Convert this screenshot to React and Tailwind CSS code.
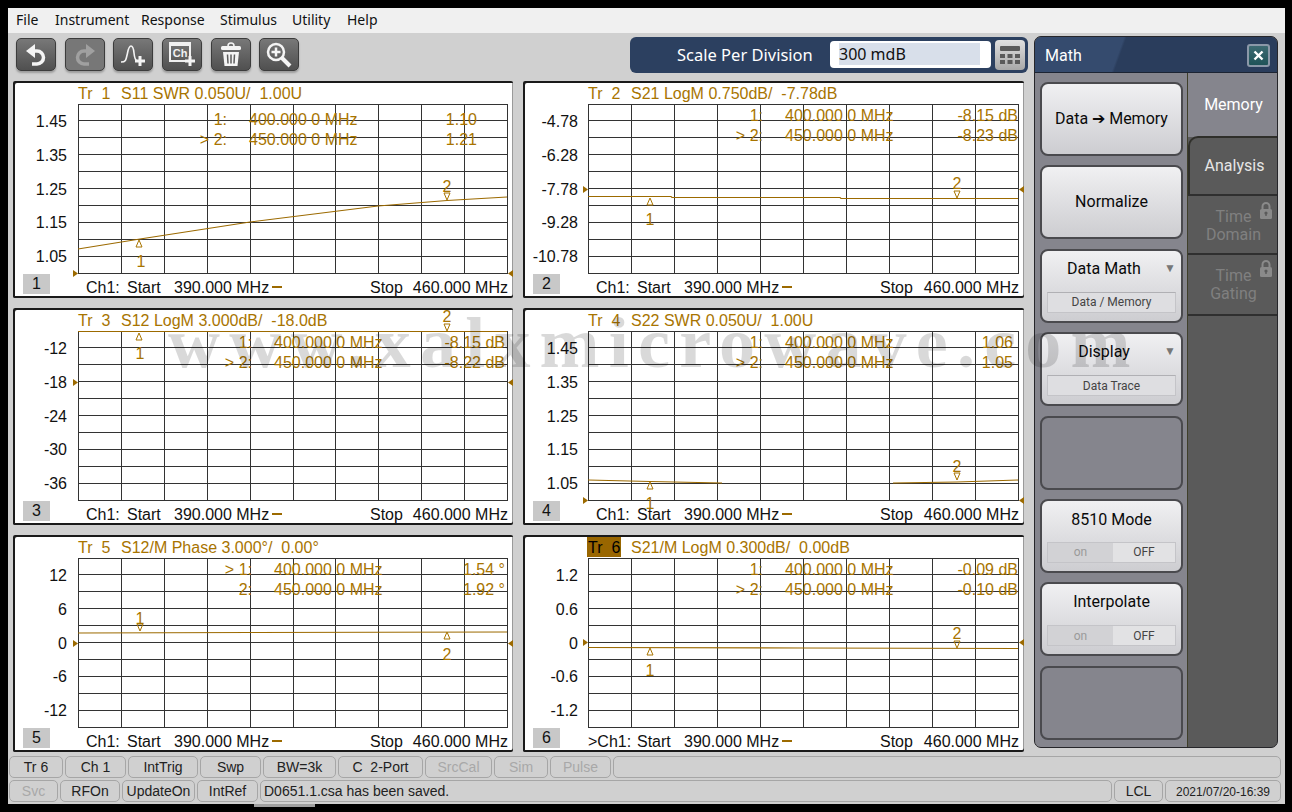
const amber = "#a87400";
const traceColor = "#9c6a00";

const xsLeft = [65, 108, 151, 194, 237, 280, 322, 365, 408, 451, 494];
const xsRight = [65, 108, 151, 194, 237, 280, 323, 366, 409, 452, 495];
const ys = [23, 39, 56, 73, 90, 107, 124, 141, 158, 175, 192];
const labelTops = [40, 74, 108, 141, 175];

const panels = [
  {
    n: "1", tr: "Tr  1", title: "S11 SWR 0.050U/  1.00U", labels: ["1.45", "1.35", "1.25", "1.15", "1.05"],
    rows: [["1:", "1.10"], ["> 2:", "1.21"]], mTop: 38, preRight: 214, freqLeft: 236, valRight: 464, arrow: 192,
    traces: ["M65 168 L127 158 L237 141 L365 125 L434 119.5 L494 116"],
    m1: { x: 126, y: 159, up: true, dy: 180, dx: 128 }, m2: { x: 434, y: 112, up: false, dy: 105, dx: 434 },
  },
  {
    n: "2", tr: "Tr  2", title: "S21 LogM 0.750dB/  -7.78dB", labels: ["-4.78", "-6.28", "-7.78", "-9.28", "-10.78"],
    rows: [["1:", "-8.15 dB"], ["> 2:", "-8.23 dB"]], mTop: 34, preRight: 239, freqLeft: 262, valRight: 494, arrow: 108,
    traces: ["M65 115.5 L148 115.5 L149 116.5 L317 116.5 L318 117.5 L495 117.5"],
    m1: { x: 127, y: 117, up: true, dy: 138, dx: 127 }, m2: { x: 434, y: 110, up: false, dy: 102, dx: 434 },
  },
  {
    n: "3", tr: "Tr  3", title: "S12 LogM 3.000dB/  -18.0dB", labels: ["-12", "-18", "-24", "-30", "-36"],
    rows: [["1:", "-8.15 dB"], ["> 2:", "-8.22 dB"]], mTop: 34, preRight: 239, freqLeft: 261, valRight: 492, arrow: 74,
    traces: ["M65 23.5 L494 23.5"],
    m1: { x: 126, y: 25, up: true, dy: 45, dx: 127 }, m2: { x: 434, y: 16, up: false, dy: 8, dx: 434 },
  },
  {
    n: "4", tr: "Tr  4", title: "S22 SWR 0.050U/  1.00U", labels: ["1.45", "1.35", "1.25", "1.15", "1.05"],
    rows: [["1:", "1.06"], ["> 2:", "1.05"]], mTop: 34, preRight: 239, freqLeft: 262, valRight: 489, arrow: 192,
    traces: ["M65 172 L127 173.5 L199 175", "M370 175 L434 174 L495 172"],
    m1: { x: 127, y: 174, up: true, dy: 195, dx: 127 }, m2: { x: 434, y: 165, up: false, dy: 158, dx: 434 },
  },
  {
    n: "5", tr: "Tr  5", title: "S12/M Phase 3.000°/  0.00°", labels: ["12", "6", "0", "-6", "-12"],
    rows: [["> 1:", "1.54 °"], ["2:", "1.92 °"]], mTop: 34, preRight: 239, freqLeft: 261, valRight: 492, arrow: 108,
    traces: ["M65 98 L237 97.5 L494 97"],
    m1: { x: 127, y: 89, up: false, dy: 83, dx: 127 }, m2: { x: 434, y: 97, up: true, dy: 119, dx: 434 },
  },
  {
    n: "6", tr: "Tr  6", title: "S21/M LogM 0.300dB/  0.00dB", labels: ["1.2", "0.6", "0", "-0.6", "-1.2"], active: true,
    rows: [["1:", "-0.09 dB"], ["> 2:", "-0.10 dB"]], mTop: 34, preRight: 239, freqLeft: 262, valRight: 494, arrow: 107,
    traces: ["M65 112.5 L280 113 L495 113.5"],
    m1: { x: 127, y: 113, up: true, dy: 135, dx: 127 }, m2: { x: 434, y: 106, up: false, dy: 98, dx: 434 },
  },
];

const freqs = ["400.000 0 MHz", "450.000 0 MHz"];

const Marker = ({ m }) => {
  const tri = m.up
    ? `${m.x},${m.y} ${m.x - 3},${m.y + 7} ${m.x + 3},${m.y + 7}`
    : `${m.x - 3},${m.y} ${m.x + 3},${m.y} ${m.x},${m.y + 7}`;
  return <polygon points={tri} fill="none" stroke={amber} strokeWidth="1" />;
};

const Panel = ({ p, right }) => {
  const xs = right ? xsRight : xsLeft;
  const gridRight = xs[10];
  return (
    <div className="relative h-[217px] bg-white rounded-[2px] shadow-[inset_2px_2px_0_#1a1a1a,inset_0_-2px_0_#1a1a1a,inset_-1px_0_0_#9a9a9a] text-[16px] leading-[22px] [font-family:Liberation_Sans,sans-serif] whitespace-pre">
      <svg className="absolute inset-0 w-full h-full overflow-visible" shapeRendering="crispEdges">
        {xs.map((x) => (
          <line key={x} x1={x + 0.5} x2={x + 0.5} y1="23" y2="193" stroke="#333" />
        ))}
        {ys.map((y) => (
          <line key={y} x1="65" x2={gridRight + 1} y1={y + 0.5} y2={y + 0.5} stroke="#333" />
        ))}
      </svg>
      <svg className="absolute inset-0 w-full h-full overflow-visible">
        {p.traces.map((d) => (
          <path key={d} d={d} fill="none" stroke={traceColor} strokeWidth="1.15" />
        ))}
        <polygon points={`60,${p.arrow - 3} 65,${p.arrow + 0.5} 60,${p.arrow + 4}`} fill={traceColor} />
        <polygon points={`${gridRight + 6},${p.arrow - 3} ${gridRight + 1},${p.arrow + 0.5} ${gridRight + 6},${p.arrow + 4}`} fill={traceColor} />
        <Marker m={p.m1} />
        <Marker m={p.m2} />
      </svg>

      {/* title */}
      <div
        className={`absolute left-[64px] top-[2px] h-[20px] px-px overflow-hidden ${p.active ? "bg-[#996600] text-black" : "text-[#a87400]"}`}
      >
        {p.tr}
      </div>
      <div className="absolute left-[108px] top-[2px] text-[#a87400]">{p.title}</div>

      {/* y axis */}
      {p.labels.map((l, i) => (
        <div key={i} className="absolute right-[446px] text-[#111]" style={{ top: labelTops[i] - 10 }}>
          {l}
        </div>
      ))}

      {/* marker table */}
      {p.rows.map((r, i) => (
        <div key={i} className="text-[#a87400]">
          <div className="absolute" style={{ top: p.mTop - 10 + i * 20, right: 500 - p.preRight }}>
            {r[0]}
          </div>
          <div className="absolute" style={{ top: p.mTop - 10 + i * 20, left: p.freqLeft }}>
            {freqs[i]}
          </div>
          <div className="absolute" style={{ top: p.mTop - 10 + i * 20, right: 500 - p.valRight }}>
            {r[1]}
          </div>
        </div>
      ))}

      {/* marker numbers */}
      <div className="absolute -translate-x-1/2 text-[#a87400]" style={{ left: p.m1.dx, top: p.m1.dy - 10 }}>
        1
      </div>
      <div className="absolute -translate-x-1/2 text-[#a87400]" style={{ left: p.m2.dx, top: p.m2.dy - 10 }}>
        2
      </div>

      {/* footer */}
      <div className="absolute left-[10px] top-[193px] w-[27px] h-[20px] bg-[#c8c8c8] text-center leading-[20px] text-[#111]">
        {p.n}
      </div>
      <div className={`absolute top-[196px] text-[#111] ${p.active ? "left-[65px]" : "left-[73px]"}`}>
        {p.active ? ">Ch1:" : "Ch1:"}
      </div>
      <div className="absolute left-[114px] top-[196px] text-[#111]">Start</div>
      <div className="absolute left-[161px] top-[196px] text-[#111]">390.000 MHz</div>
      <div className="absolute left-[259px] top-[205px] w-[10px] h-[2px] bg-[#9c6a00]" />
      <div className="absolute left-[357px] top-[196px] text-[#111]">Stop</div>
      <div className="absolute right-[5px] top-[196px] text-[#111]">460.000 MHz</div>
    </div>
  );
};

const ToolButton = ({ children, off }) => (
  <div
    className={`w-[40px] h-[33px] rounded-[5px] border border-[#3c3c3c] flex items-center justify-center shadow-[0_2px_2px_rgba(0,0,0,0.25)] ${
      off ? "bg-[#777777]" : "bg-gradient-to-b from-[#787878] to-[#505050]"
    }`}
  >
    {children}
  </div>
);

const Lock = () => (
  <svg width="14" height="17" viewBox="0 0 14 17" className="absolute right-[6px] top-[6px]">
    <path d="M3.5 7V4.5a3.5 3.5 0 0 1 7 0V7" fill="none" stroke="#8a8a8a" strokeWidth="2" />
    <rect x="1" y="7" width="12" height="10" rx="1.5" fill="#8a8a8a" />
    <circle cx="7" cy="11" r="1.6" fill="#5a5a5a" />
    <rect x="6.3" y="11" width="1.4" height="3" fill="#5a5a5a" />
  </svg>
);

const softKey =
  "w-[143px] h-[74px] rounded-[8px] border-2 border-[#4a4a4e] bg-gradient-to-b from-[#f0f0f2] to-[#cdcdd1] text-[#0a0a0a] relative";
const emptyKey = "w-[143px] h-[74px] rounded-[8px] border-2 border-[#4a4a4e] bg-[#85858d]";

const Sub = ({ children }) => (
  <div className="absolute left-[5px] top-[41px] w-[129px] h-[21px] border border-[#c4c4c8] border-t-[#b0b0b4] bg-[#dedee1] flex items-center justify-center text-[12px] text-[#444]">
    {children}
  </div>
);

const Toggle = () => (
  <div className="absolute left-[5px] top-[41px] w-[129px] h-[21px] border border-[#c4c4c8] flex text-[12px]">
    <div className="w-[65px] bg-[#d2d2d5] text-[#9a9a9a] flex items-center justify-center">on</div>
    <div className="flex-1 bg-[#e2e2e4] text-[#444] flex items-center justify-center">OFF</div>
  </div>
);

const Cell = ({ w, off, children, className = "" }) => (
  <div
    className={`shrink-0 h-[22px] pt-px rounded-[5px] border border-[#a6a6a6] flex items-center justify-center text-[14px] whitespace-pre ${
      off ? "text-[#a8a8a8]" : "text-[#222]"
    } ${className}`}
    style={{ width: w }}
  >
    {children}
  </div>
);

export default function App() {
  return (
    <div className="relative w-[1292px] h-[812px] bg-black overflow-hidden [font-family:Noto_Sans,sans-serif]">
      <div className="absolute left-[8px] top-[8px] w-[1277px] h-[796px] bg-[#d0d0d0]">
        {/* menu */}
        <div className="h-[25px] bg-[#f0f0f0] relative text-[14px] leading-[24px] text-[#111]">
          <span className="absolute left-[8px]">File</span>
          <span className="absolute left-[47px]">Instrument</span>
          <span className="absolute left-[133px]">Response</span>
          <span className="absolute left-[212px]">Stimulus</span>
          <span className="absolute left-[284px]">Utility</span>
          <span className="absolute left-[339px]">Help</span>
        </div>

        {/* toolbar */}
        <div className="absolute left-[8px] top-[30px] flex gap-[8.7px]">
          <ToolButton>
            <svg width="26" height="24" viewBox="0 0 26 24">
              <polygon points="3,8 12,1 12,15" fill="#f4f4f4" />
              <path d="M10 8h4a6.500 6.500 0 0 1 0 13H9" fill="none" stroke="#f4f4f4" strokeWidth="3.500" />
            </svg>
          </ToolButton>
          <ToolButton off>
            <svg width="26" height="24" viewBox="0 0 26 24">
              <polygon points="23,8 14,1 14,15" fill="#a0a0a0" />
              <path d="M16 8h-4a6.500 6.500 0 0 0 0 13h5" fill="none" stroke="#a0a0a0" strokeWidth="3.500" />
            </svg>
          </ToolButton>
          <ToolButton>
            <svg width="30" height="26" viewBox="0 0 30 26">
              <path d="M3 20c5 0 5-2 6.500-9C10.500 6 11.500 4 13 4s2.500 2 3 7c.4 4 1 7 3 8" fill="none" stroke="#f4f4f4" strokeWidth="1.600" />
              <path d="M22 14v10M17 19h10" stroke="#f4f4f4" strokeWidth="3" />
            </svg>
          </ToolButton>
          <ToolButton>
            <div className="relative w-[30px] h-[26px]">
              <div className="absolute left-[2px] top-0 w-[22px] h-[20px] border-2 border-t-[4px] border-[#f0f0f0] text-[#f0f0f0] text-[11px] leading-[14px] font-bold [font-family:Liberation_Sans,sans-serif] text-center">
                Ch
              </div>
              <svg className="absolute inset-0" width="30" height="26" viewBox="0 0 30 26">
                <path d="M23 14v10M18 19h10" stroke="#f4f4f4" strokeWidth="3" />
              </svg>
            </div>
          </ToolButton>
          <ToolButton>
            <svg width="24" height="26" viewBox="0 0 24 26">
              <path d="M9 4a3 3 0 0 1 6 0" fill="none" stroke="#f4f4f4" strokeWidth="1.500" />
              <rect x="2" y="4" width="20" height="4" rx="1.500" fill="#f4f4f4" />
              <path d="M4 10h16l-1.500 14h-13z" fill="#f4f4f4" />
              <path d="M8.500 12.500l.5 9M12 12.500v9M15.500 12.500l-.5 9" stroke="#5c5c5c" strokeWidth="1.500" />
            </svg>
          </ToolButton>
          <ToolButton>
            <svg width="28" height="26" viewBox="0 0 28 26">
              <circle cx="11" cy="10" r="8" fill="none" stroke="#f4f4f4" strokeWidth="2.500" />
              <path d="M17 16l8 8" stroke="#f4f4f4" strokeWidth="4" />
              <path d="M11 5.500v9M6.500 10h9" stroke="#f4f4f4" strokeWidth="2.500" />
            </svg>
          </ToolButton>
        </div>

        {/* scale per division */}
        <div className="absolute left-[622px] top-[29px] w-[398px] h-[36px] rounded-[6px] bg-[#2c4060]">
          <div className="absolute left-[47px] top-[6px] text-[16.5px] leading-[24px] text-white">Scale Per Division</div>
          <div className="absolute left-[200px] top-[4px] w-[161px] h-[27px] rounded-[4px] bg-white">
            <div className="absolute left-[9px] top-[2px] w-[141px] h-[22px] bg-[#d8dfea] text-[16px] leading-[23px] text-[#111]">
              300 mdB
            </div>
          </div>
          <div className="absolute left-[365px] top-[3px] w-[30px] h-[30px] rounded-[4px] bg-gradient-to-b from-[#e0e0e0] to-[#a8a8a8] flex items-center justify-center">
            <svg width="22" height="20" viewBox="0 0 22 20" fill="#5a5a5a">
              <rect x="1" y="1" width="20" height="5" rx="1" />
              <rect x="1" y="9" width="5" height="4" />
              <rect x="8.500" y="9" width="5" height="4" />
              <rect x="16" y="9" width="5" height="4" />
              <rect x="1" y="15" width="5" height="4" />
              <rect x="8.500" y="15" width="5" height="4" />
              <rect x="16" y="15" width="5" height="4" />
            </svg>
          </div>
        </div>

        {/* traces */}
        <div className="absolute left-[5px] top-[73px] w-[1011px] grid grid-cols-[500px_501px] gap-x-[10px] gap-y-[10px]">
          {panels.map((p, i) => (
            <Panel key={p.n} p={p} right={i % 2 === 1} />
          ))}
        </div>

        {/* math softkeys */}
        <div className="absolute left-[1026px] top-[28px] w-[244px] h-[712px] rounded-[7px] overflow-hidden bg-[#5a5a5a] border border-[#26262a] text-[16px] [font-family:Roboto,sans-serif]">
          <div className="absolute left-0 top-[36px] w-[153px] h-[676px] bg-[#85858d] border-r border-[#3f3f2a]" />
          <div className="absolute left-[153px] top-[36px] w-[91px] h-[64px] bg-[#85858d] flex items-center justify-center text-white">
            Memory
          </div>
          <div className="absolute left-[153px] top-[99px] w-[91px] h-[58px] rounded-tl-[10px] bg-[#5a5a5a] border-t-2 border-l-2 border-[#2f2f2a] flex items-center justify-center text-[#e6e6e6]">
            Analysis
          </div>
          <div className="absolute left-[153px] top-[157px] w-[91px] h-[61px] border-y-2 border-[#2f2f2f] text-[#808080] text-center leading-[18px] pt-[12px]">
            Time
            <br />
            Domain
            <Lock />
          </div>
          <div className="absolute left-[153px] top-[217px] w-[91px] h-[62px] border-b-2 border-[#2f2f2f] text-[#808080] text-center leading-[18px] pt-[13px]">
            Time
            <br />
            Gating
            <Lock />
          </div>

          <div className="absolute inset-x-0 top-0 h-[36px] bg-[linear-gradient(110deg,#354b6e_0%,#354b6e_35%,#2a3d5c_36%,#2a3d5c_100%)] border-b border-[#1c2433]">
            <div className="absolute left-[10px] top-[7px] text-white leading-[24px]">Math</div>
            <div className="absolute left-[212px] top-[7px] w-[23px] h-[23px] rounded-[3px] border-2 border-[#8b98a8] bg-gradient-to-b from-[#3d6a72] to-[#1f5358] flex items-center justify-center">
              <svg width="11" height="11" viewBox="0 0 11 11">
                <path d="M1.500 1.500l8 8M9.500 1.500l-8 8" stroke="#fff" strokeWidth="2.400" />
              </svg>
            </div>
          </div>

          <div className="absolute left-[5px] top-[45px] flex flex-col gap-[9.4px]">
            <div className={`${softKey} flex items-center justify-center`}>Data ➔ Memory</div>
            <div className={`${softKey} flex items-center justify-center`}>Normalize</div>
            <div className={softKey}>
              <div className="absolute inset-x-0 top-[6px] pr-[15px] text-center">Data Math</div>
              <div className="absolute right-[5px] top-[8px] text-[12px] text-[#777]">▼</div>
              <Sub>Data / Memory</Sub>
            </div>
            <div className={softKey}>
              <div className="absolute inset-x-0 top-[6px] pr-[15px] text-center">Display</div>
              <div className="absolute right-[5px] top-[8px] text-[12px] text-[#777]">▼</div>
              <Sub>Data Trace</Sub>
            </div>
            <div className={emptyKey} />
            <div className={softKey}>
              <div className="absolute inset-x-0 top-[7px] text-center">8510 Mode</div>
              <Toggle />
            </div>
            <div className={softKey}>
              <div className="absolute inset-x-0 top-[6px] text-center">Interpolate</div>
              <Toggle />
            </div>
            <div className={emptyKey} />
          </div>
        </div>

        {/* status rows */}
        <div className="absolute left-[1px] top-[748px] flex gap-[2px] [font-family:Liberation_Sans,sans-serif]">
          <Cell w={54}>Tr 6</Cell>
          <Cell w={61}>Ch 1</Cell>
          <Cell w={70}>IntTrig</Cell>
          <Cell w={61}>Swp</Cell>
          <Cell w={73}>BW=3k</Cell>
          <Cell w={85}>C  2-Port</Cell>
          <Cell w={67} off>SrcCal</Cell>
          <Cell w={54} off>Sim</Cell>
          <Cell w={61} off>Pulse</Cell>
          <Cell w={668} />
        </div>
        <div className="absolute left-[1px] top-[772px] flex gap-[2px] [font-family:Liberation_Sans,sans-serif]">
          <Cell w={49} off>Svc</Cell>
          <Cell w={60}>RFOn</Cell>
          <Cell w={73}>UpdateOn</Cell>
          <Cell w={61}>IntRef</Cell>
          <Cell w={852} className="!justify-start pl-[3px]">
            D0651.1.csa has been saved.
          </Cell>
          <Cell w={49}>LCL</Cell>
          <Cell w={116} className="!text-[12px]">
            2021/07/20-16:39
          </Cell>
        </div>
      </div>

      <div className="absolute left-[254px] top-[804px] w-[61px] h-[3px] bg-[#a0a0a0]" />

      {/* watermark */}
      <div className="absolute left-[168px] top-[303px] text-[72px] leading-[80px] tracking-[9.2px] font-bold [font-family:Liberation_Serif,serif] text-black/15 whitespace-pre pointer-events-none">
        www.xalxmicrowave.com
      </div>
    </div>
  );
}
